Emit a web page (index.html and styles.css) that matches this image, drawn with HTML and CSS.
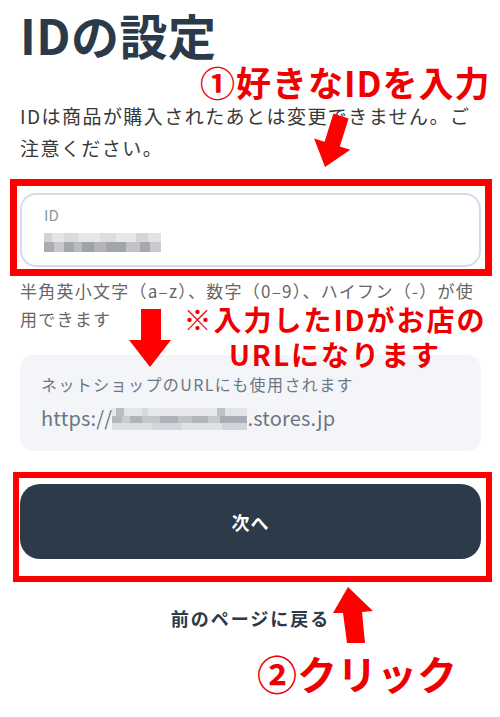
FILE: index.html
```html
<!DOCTYPE html>
<html lang="ja">
<head>
<meta charset="utf-8">
<title>IDの設定</title>
<link rel="stylesheet" href="styles.css">
</head>
<body>
<main class="page">
  <h1 class="title">IDの設定</h1>
  <p class="lead">IDは商品が購入されたあとは変更できません。ご<br>注意ください。</p>

  <div class="field">
    <span class="field-label">ID</span>
    <span class="mosaic mosaic-id" aria-label="入力されたID"></span>
  </div>

  <p class="hint">半角英小文字（a–z）、数字（0–9）、ハイフン（-）が使<br>用できます</p>

  <div class="url-box">
    <p class="url-caption">ネットショップのURLにも使用されます</p>
    <p class="url">https://<span class="mosaic mosaic-url"></span>.stores.jp</p>
  </div>

  <button class="next" type="button">次へ</button>

  <a class="back" href="#">前のページに戻る</a>

  <!-- annotation overlays -->
  <div class="frame frame-field"></div>
  <div class="frame frame-button"></div>

  <svg class="arrows" width="500" height="717" viewBox="0 0 500 717" aria-hidden="true">
    <polygon points="333.4,113.6 348.6,118.4 339.8,146.5 350.3,149.8 325,167 314.1,138.4 324.6,141.7"/>
    <polygon points="141,309 161,309 161,340 171,340 150,367 129,340 141,340"/>
    <polygon points="348,587 373,611 362,612 365,643 347,643 343,613 333,613"/>
  </svg>

  <div class="note note-1">①好きなIDを入力</div>
  <div class="note note-2">※入力したIDがお店の<br>URLになります</div>
  <div class="note note-3">②クリック</div>
</main>
</body>
</html>
```

FILE: styles.css
```css
* {
  box-sizing: border-box;
}

html, body {
  margin: 0;
  padding: 0;
  background: #ffffff;
}

body {
  font-family: "Noto Sans CJK JP", "Noto Sans", sans-serif;
  color: #333333;
}

.page {
  position: relative;
  width: 500px;
  height: 717px;
  padding: 0 19px 0 20px;
  display: flex;
  flex-direction: column;
  overflow: hidden;
}

.title {
  margin: 4px 0 0;
  font-size: 48px;
  line-height: 60px;
  font-weight: 700;
  color: #2b3a4a;
  letter-spacing: 0.5px;
}

.lead {
  margin: 36px 0 0;
  font-size: 19px;
  line-height: 32px;
  letter-spacing: 1.45px;
  color: #383838;
}

.field {
  margin-top: 29px;
  height: 74px;
  border: 2px solid #d3dce7;
  border-radius: 16px;
  padding: 10px 22px 0;
  display: flex;
  flex-direction: column;
  align-items: flex-start;
  background: #fff;
}

.field-label {
  font-size: 15px;
  line-height: 20px;
  color: #8b96a2;
}

.mosaic {
  display: inline-block;
}

.mosaic-id {
  margin-top: 8px;
  width: 117px;
  height: 19px;
  background-image:
    linear-gradient(to right,
      #d2d3d7 0 8px, #e4e4e7 8px 20px, #d9dadd 20px 34px, #e6e6e8 34px 56px,
      #dcdde0 56px 72px, #e8e8ea 72px 92px, #d4d5d8 92px 104px, #e2e2e4 104px 117px),
    linear-gradient(to right,
      #a9acb2 0 10px, #c7c8cc 10px 20px, #a3a6ac 20px 30px, #b9bbc0 30px 38px,
      #9fa2a8 38px 50px, #b2b4b9 50px 62px, #a1a4aa 62px 82px, #c0c2c6 82px 96px,
      #a5a8ae 96px 106px, #c9cacd 106px 117px);
  background-size: 100% 9px, 100% 10px;
  background-position: top left, bottom left;
  background-repeat: no-repeat;
  filter: blur(0.6px);
}

.hint {
  margin: 10px 0 0;
  font-size: 17px;
  line-height: 28px;
  letter-spacing: 1.25px;
  color: #666666;
}

.url-box {
  margin-top: 22px;
  height: 96px;
  border-radius: 14px;
  background: #f3f5f8;
  padding: 17px 21px 0;
}

.url-caption {
  margin: 0;
  font-size: 16px;
  line-height: 24px;
  letter-spacing: 1.4px;
  color: #6b7784;
}

.url {
  margin: 8px 0 0;
  font-size: 20px;
  line-height: 28px;
  letter-spacing: 0.2px;
  color: #6b7784;
  white-space: nowrap;
}

.mosaic-url {
  width: 135px;
  height: 22px;
  vertical-align: -4px;
  background-image:
    linear-gradient(to right,
      #e6e8eb 0 4px, #b9bdc2 4px 12px, #e3e5e8 12px 30px, #d6d9dd 30px 36px,
      #e6e8eb 36px 105px, #bdc1c6 105px 113px, #e1e3e6 113px 135px),
    linear-gradient(to right,
      #b5b9bf 0 10px, #c9ccd1 10px 18px, #b0b4ba 18px 30px, #c4c7cc 30px 48px,
      #aeb2b8 48px 66px, #bfc2c7 66px 80px, #b2b6bc 80px 96px, #c6c9cd 96px 108px,
      #a9adb3 108px 135px),
    linear-gradient(to right,
      #dcdfe2 0 40px, #d3d6da 40px 70px, #dfe1e4 70px 110px, #d1d4d8 110px 135px);
  background-size: 100% 8px, 100% 7px, 100% 7px;
  background-position: left top, left 8px, left bottom;
  background-repeat: no-repeat;
  filter: blur(0.6px);
}

.next {
  margin-top: 33px;
  height: 75px;
  width: 100%;
  border: none;
  border-radius: 20px;
  background: #2c3a4a;
  color: #ffffff;
  font-family: inherit;
  font-size: 18px;
  font-weight: 700;
  letter-spacing: 1px;
  display: flex;
  align-items: center;
  justify-content: center;
  padding: 0;
}

.back {
  margin-top: 46px;
  align-self: center;
  font-size: 18px;
  line-height: 26px;
  font-weight: 700;
  letter-spacing: 2px;
  color: #2c3a4a;
  text-decoration: none;
}

/* ---------- annotation overlays ---------- */

.frame {
  position: absolute;
  border: 7px solid #ff0000;
  pointer-events: none;
}

.frame-field {
  left: 10px;
  top: 179px;
  width: 482px;
  height: 97px;
}

.frame-button {
  left: 13px;
  top: 472px;
  width: 479px;
  height: 110px;
  border-width: 6px;
}

.arrows {
  position: absolute;
  left: 0;
  top: 0;
  pointer-events: none;
}

.arrows polygon {
  fill: #ff0000;
}

.note {
  position: absolute;
  color: #ee0000;
  font-weight: 700;
  white-space: nowrap;
}

.note-1 {
  left: 200px;
  top: 62px;
  font-size: 35px;
  line-height: 40px;
  letter-spacing: 1px;
}

.note-2 {
  left: 180px;
  top: 302px;
  width: 310px;
  text-align: center;
  font-size: 28px;
  line-height: 35px;
  letter-spacing: 2px;
}

.note-3 {
  left: 257px;
  top: 650px;
  font-size: 40px;
  line-height: 46px;
}
```
